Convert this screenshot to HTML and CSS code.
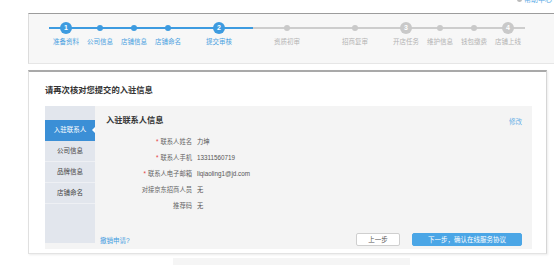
FILE: index.html
```html
<!DOCTYPE html>
<html>
<head>
    <meta charset="UTF-8">
    <title>入驻信息核对</title>
    <link rel="stylesheet" href="styles.css">
</head>
<body>
    <div class="topbar">
        <span class="help"><i class="help-dot"></i>帮助中心</span>
    </div>

    <div class="steps-panel">
        <div class="steps">
            <div class="step done"><div class="track"><span class="num">1</span></div><div class="label">准备资料</div></div>
            <div class="step done"><div class="track"><span class="dot"></span></div><div class="label">公司信息</div></div>
            <div class="step done"><div class="track"><span class="dot"></span></div><div class="label">店铺信息</div></div>
            <div class="step done"><div class="track"><span class="dot"></span></div><div class="label">店铺命名</div></div>
            <div class="step done wide"><div class="track"><span class="num">2</span></div><div class="label">提交审核</div></div>
            <div class="step todo wide"><div class="track"><span class="dot"></span></div><div class="label">资质初审</div></div>
            <div class="step todo wide"><div class="track"><span class="dot"></span></div><div class="label">招商复审</div></div>
            <div class="step todo"><div class="track"><span class="num">3</span></div><div class="label">开店任务</div></div>
            <div class="step todo"><div class="track"><span class="dot"></span></div><div class="label">维护信息</div></div>
            <div class="step todo"><div class="track"><span class="dot"></span></div><div class="label">钱包缴费</div></div>
            <div class="step todo"><div class="track"><span class="num">4</span></div><div class="label">店铺上线</div></div>
        </div>
    </div>

    <div class="main-panel">
        <h2 class="panel-title">请再次核对您提交的入驻信息</h2>
        <div class="review-box">
            <ul class="side-nav">
                <li class="active">入驻联系人</li>
                <li>公司信息</li>
                <li>品牌信息</li>
                <li>店铺命名</li>
            </ul>
            <div class="review-content">
                <div class="content-head">
                    <h3>入驻联系人信息</h3>
                    <a class="edit-link">修改</a>
                </div>
                <div class="fields">
                    <div class="field-label"><span class="req">*</span>联系人姓名</div><div class="field-value">力坤</div>
                    <div class="field-label"><span class="req">*</span>联系人手机</div><div class="field-value">13311560719</div>
                    <div class="field-label"><span class="req">*</span>联系人电子邮箱</div><div class="field-value">liqiaoling1@jd.com</div>
                    <div class="field-label">对接京东招商人员</div><div class="field-value">无</div>
                    <div class="field-label">推荐码</div><div class="field-value">无</div>
                </div>
                <div class="content-foot">
                    <a class="cancel-link">撤销申请?</a>
                    <div class="actions">
                        <button class="btn btn-prev">上一步</button>
                        <button class="btn btn-next">下一步，确认在线服务协议</button>
                    </div>
                </div>
            </div>
        </div>
    </div>

    <div class="bottom-strip"></div>
</body>
</html>
```

FILE: styles.css
```css
body, html {
    margin: 0;
    padding: 0;
    background-color: #fff;
    font-family: "Liberation Sans", "Noto Sans CJK SC", sans-serif;
    color: #555;
    overflow: hidden;
}
.topbar {
    height: 13px;
    display: flex;
    justify-content: flex-end;
    align-items: flex-start;
}
.help {
    margin-top: -5px;
    margin-right: 2px;
    font-size: 7px;
    line-height: 9px;
    color: #5aaae6;
    display: flex;
    align-items: center;
    gap: 2px;
}
.help-dot {
    display: inline-block;
    width: 5px;
    height: 5px;
    border-radius: 50%;
    background-color: #bbb;
}

/* progress steps */
.steps-panel {
    margin-left: 28px;
    height: 49px;
    background-color: #f7f7f7;
    border-top: 1px solid #9c9c9c;
    border-left: 1px solid #dcdcdc;
    border-bottom: 1px solid #e6e6e6;
    margin-bottom: 6px;
}
.steps {
    display: flex;
    padding-left: 20px;
    padding-top: 8px;
}
.step {
    width: 34px;
    display: flex;
    flex-direction: column;
    align-items: center;
}
.step.wide { width: 68px; }
.track {
    width: 100%;
    height: 12px;
    display: flex;
    justify-content: center;
    align-items: center;
    background: linear-gradient(#3d9be0, #3d9be0) center / 100% 2px no-repeat;
}
.step.todo .track {
    background-image: linear-gradient(#cdcdcd, #cdcdcd);
}
.dot {
    width: 6px;
    height: 6px;
    border-radius: 50%;
    background-color: #3d9be0;
}
.num {
    width: 12px;
    height: 12px;
    border-radius: 50%;
    background-color: #3d9be0;
    color: #fff;
    font-size: 7px;
    font-weight: bold;
    line-height: 12px;
    text-align: center;
}
.step.todo .dot, .step.todo .num { background-color: #c9c9c9; }
.label {
    margin-top: 3px;
    font-size: 6.5px;
    line-height: 10px;
    color: #4a9fe0;
    white-space: nowrap;
}
.step.todo .label { color: #b3b3b3; }

/* main panel */
.main-panel {
    margin-left: 28px;
    width: 487px;
    border-top: 2px solid #a9a9a9;
    border-left: 1px solid #e0e0e0;
    border-right: 1px solid #d6d6d6;
    border-bottom: 1px solid #e3e3e3;
    padding: 12px 14px 4px 16px;
    box-shadow: 1px 1px 2px rgba(0,0,0,0.08);
}
.panel-title {
    margin: 0 0 10px 0;
    font-size: 8.3px;
    line-height: 12px;
    font-weight: bold;
    color: #333;
}
.review-box {
    display: flex;
    height: 143px;
    background-color: #f4f4f4;
}
.side-nav {
    list-style: none;
    margin: 0;
    padding: 14px 0 0 0;
    width: 50px;
    height: 123px;
    background-color: #e2e6ed;
}
.side-nav li {
    position: relative;
    height: 20px;
    line-height: 20px;
    text-align: center;
    font-size: 6.5px;
    color: #444;
    border-bottom: 1px solid #eef0f4;
}
.side-nav li.active {
    background-color: #3b8fd6;
    color: #fff;
    border-bottom-color: #3b8fd6;
}
.side-nav li.active::after { /* notch pointing into the content */
    content: "";
    position: absolute;
    right: 0;
    top: 7px;
    border-top: 3px solid transparent;
    border-bottom: 3px solid transparent;
    border-right: 3px solid #fff;
}
.review-content {
    flex-grow: 1;
    display: flex;
    flex-direction: column;
    padding: 9px 10px 3px 5px;
}
.content-head {
    display: flex;
    justify-content: space-between;
    align-items: center;
    padding-left: 6px;
}
.content-head h3 {
    margin: 0;
    font-size: 8.2px;
    line-height: 12px;
    font-weight: bold;
    color: #333;
}
.edit-link {
    font-size: 6.5px;
    color: #6ab0e6;
}
.fields {
    display: grid;
    grid-template-columns: 92px auto;
    grid-auto-rows: 15.8px;
    column-gap: 5px;
    align-items: center;
    margin-top: 7px;
    font-size: 6.3px;
}
.field-label {
    text-align: right;
    color: #666;
}
.field-value { color: #555; }
.req {
    color: #e4393c;
    margin-right: 2px;
}
.content-foot {
    margin-top: auto;
    display: flex;
    justify-content: space-between;
    align-items: flex-end;
}
.cancel-link {
    font-size: 6.5px;
    line-height: 10px;
    color: #3d9be0;
}
.actions {
    display: flex;
    gap: 12px;
}
.btn {
    height: 13px;
    padding: 0;
    border-radius: 2px;
    font-family: "Liberation Sans", "Noto Sans CJK SC", sans-serif;
    font-size: 6.5px;
    line-height: 11px;
    cursor: pointer;
}
.btn-prev {
    width: 44px;
    background-color: #fff;
    border: 1px solid #cfcfcf;
    color: #555;
}
.btn-next {
    width: 110px;
    background-color: #4ba6e6;
    border: 1px solid #4ba6e6;
    color: #fff;
}
.bottom-strip {
    margin: 4px 0 0 173px;
    width: 237px;
    height: 10px;
    background-color: #f5f5f5;
}
```
